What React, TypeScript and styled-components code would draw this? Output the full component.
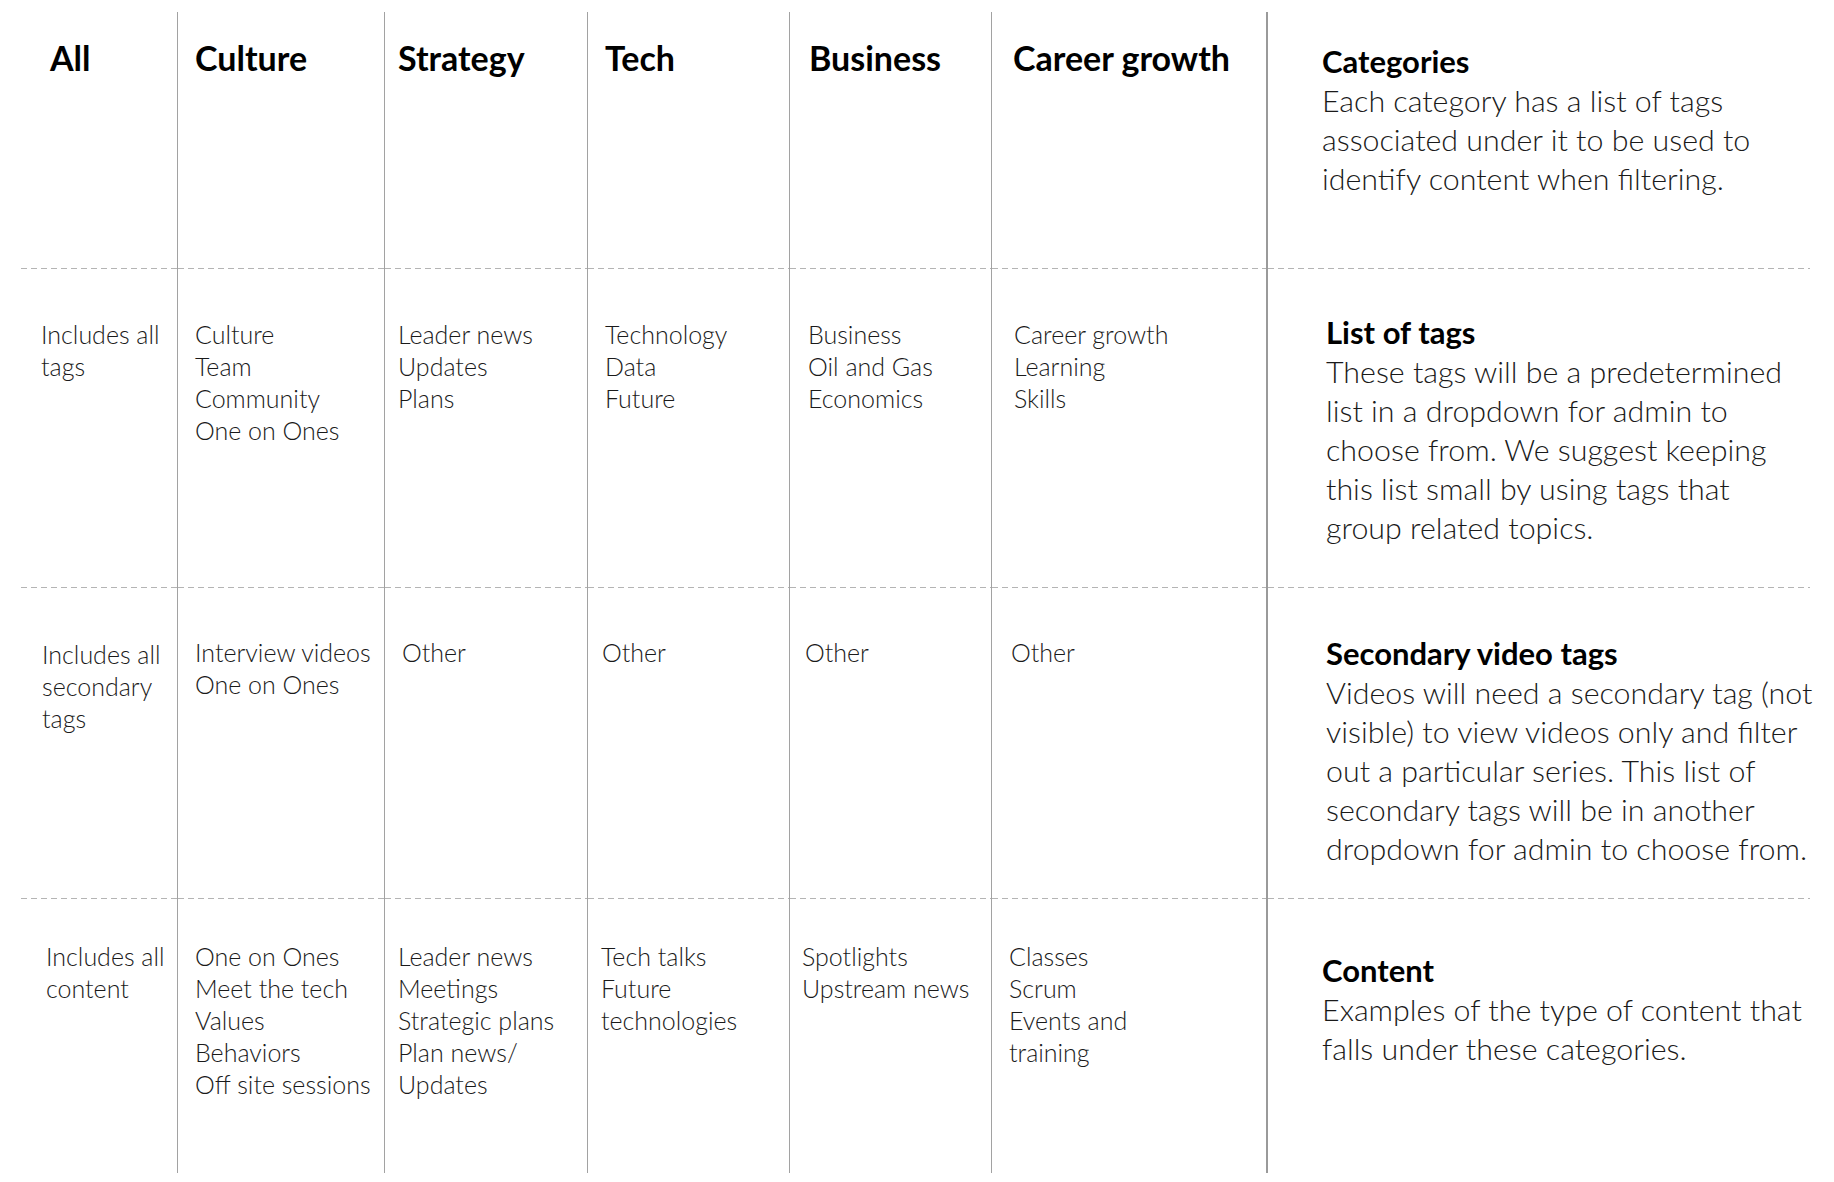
import React from "react";
import styled, { createGlobalStyle } from "styled-components";

const GlobalStyle = createGlobalStyle`
  html, body {
    margin: 0;
    padding: 0;
    background: #ffffff;
  }
  body {
    font-family: Lato, "Open Sans", "Liberation Sans", sans-serif;
    color: #111;
    overflow: hidden;
  }
  * { box-sizing: border-box; }
`;

const Board = styled.div`
  display: grid;
  grid-template-columns: 157px 207px 203px 202px 202px 276px 542px;
  grid-template-rows: 257px 319px 311px 274px;
  margin: 12px 0 0 21px;
  width: 1789px;
`;

type Divider = "none" | "thin" | "thick";

const Cell = styled.div<{ $divider: Divider; $dashed: boolean; $pt: number; $pl: number }>`
  padding: ${(p) => p.$pt}px 8px 0 ${(p) => p.$pl}px;
  border-right: ${(p) =>
    p.$divider === "thin" ? "1px solid #a2a2a2" : p.$divider === "thick" ? "2px solid #9a9a9a" : "none"};
  background-image: ${(p) =>
    p.$dashed ? "repeating-linear-gradient(to right, #b4b4b4 0 6px, transparent 6px 10px)" : "none"};
  background-size: 100% 1px;
  background-position: left bottom;
  background-repeat: no-repeat;
  min-width: 0;
`;

const CategoryTitle = styled.h2`
  margin: 0;
  font-family: Lato, "Open Sans", sans-serif;
  font-weight: 700;
  font-size: 34px;
  line-height: 40px;
  color: #000;
  white-space: nowrap;
`;

const TagList = styled.ul`
  list-style: none;
  margin: 0;
  padding: 0;
`;

const Tag = styled.li`
  font-family: Lato, "Open Sans", sans-serif;
  font-weight: 300;
  font-size: 25px;
  line-height: 32px;
  color: #1a1a1a;
  white-space: nowrap;
`;

const Blurb = styled.p`
  margin: 0;
  font-family: Lato, "Open Sans", sans-serif;
  font-weight: 300;
  font-size: 25px;
  line-height: 32px;
  color: #1a1a1a;
`;

const NoteTitle = styled.h3`
  margin: 0;
  font-family: Lato, "Open Sans", sans-serif;
  font-weight: 700;
  font-size: 31px;
  line-height: 39px;
  color: #000;
`;

const NoteText = styled.p`
  margin: 0;
  font-family: Lato, "Open Sans", sans-serif;
  font-weight: 300;
  font-size: 30.4px;
  line-height: 39px;
  color: #1a1a1a;
  white-space: pre;
`;

const categories = ["All", "Culture", "Strategy", "Tech", "Business", "Career growth"];

type Row = {
  pts: number[];
  pls: number[];
  cells: string[][];
  note: { title: string; text: string; pt: number; pl: number };
};

const headerPads = { pt: 26, pls: [29, 17, 13, 17, 19, 21] };

const rows: Row[] = [
  {
    pts: [49, 49, 49, 49, 49, 49],
    pls: [20, 17, 13, 17, 18, 22],
    cells: [
      ["Includes all tags"],
      ["Culture", "Team", "Community", "One on Ones"],
      ["Leader news", "Updates", "Plans"],
      ["Technology", "Data", "Future"],
      ["Business", "Oil and Gas", "Economics"],
      ["Career growth", "Learning", "Skills"],
    ],
    note: {
      title: "List of tags",
      text:
        "These tags will be a predetermined\nlist in a dropdown for admin to\nchoose from. We suggest keeping\nthis list small by using tags that\ngroup related topics.",
      pt: 44,
      pl: 58,
    },
  },
  {
    pts: [50, 48, 48, 48, 48, 48],
    pls: [21, 17, 17, 14, 15, 19],
    cells: [
      ["Includes all secondary tags"],
      ["Interview videos", "One on Ones"],
      ["Other"],
      ["Other"],
      ["Other"],
      ["Other"],
    ],
    note: {
      title: "Secondary video tags",
      text:
        "Videos will need a secondary tag (not\nvisible) to view videos only and filter\nout a particular series. This list of\nsecondary tags will be in another\ndropdown for admin to choose from.",
      pt: 46,
      pl: 58,
    },
  },
  {
    pts: [41, 41, 41, 41, 41, 41],
    pls: [25, 17, 13, 13, 12, 17],
    cells: [
      ["Includes all content"],
      ["One on Ones", "Meet the tech", "Values", "Behaviors", "Off site sessions"],
      ["Leader news", "Meetings", "Strategic plans", "Plan news/", "Updates"],
      ["Tech talks", "Future", "technologies"],
      ["Spotlights", "Upstream news"],
      ["Classes", "Scrum", "Events and", "training"],
    ],
    note: {
      title: "Content",
      text: "Examples of the type of content that\nfalls under these categories.",
      pt: 52,
      pl: 54,
    },
  },
];

const dividerFor = (i: number): Divider => (i < 5 ? "thin" : "thick");

export default function App() {
  return (
    <>
      <GlobalStyle />
      <Board>
        {categories.map((c, i) => (
          <Cell key={c} $divider={dividerFor(i)} $dashed $pt={headerPads.pt} $pl={headerPads.pls[i]}>
            <CategoryTitle>{c}</CategoryTitle>
          </Cell>
        ))}
        <Cell $divider="none" $dashed $pt={30} $pl={54}>
          <NoteTitle>Categories</NoteTitle>
          <NoteText>{"Each category has a list of tags\nassociated under it to be used to\nidentify content when filtering."}</NoteText>
        </Cell>

        {rows.map((row, r) => {
          const last = r === rows.length - 1;
          return (
            <React.Fragment key={r}>
              {row.cells.map((lines, i) => (
                <Cell key={i} $divider={dividerFor(i)} $dashed={!last} $pt={row.pts[i]} $pl={row.pls[i]}>
                  {i === 0 ? (
                    <Blurb>{lines[0]}</Blurb>
                  ) : (
                    <TagList>
                      {lines.map((l) => (
                        <Tag key={l}>{l}</Tag>
                      ))}
                    </TagList>
                  )}
                </Cell>
              ))}
              <Cell $divider="none" $dashed={!last} $pt={row.note.pt} $pl={row.note.pl}>
                <NoteTitle>{row.note.title}</NoteTitle>
                <NoteText>{row.note.text}</NoteText>
              </Cell>
            </React.Fragment>
          );
        })}
      </Board>
    </>
  );
}
